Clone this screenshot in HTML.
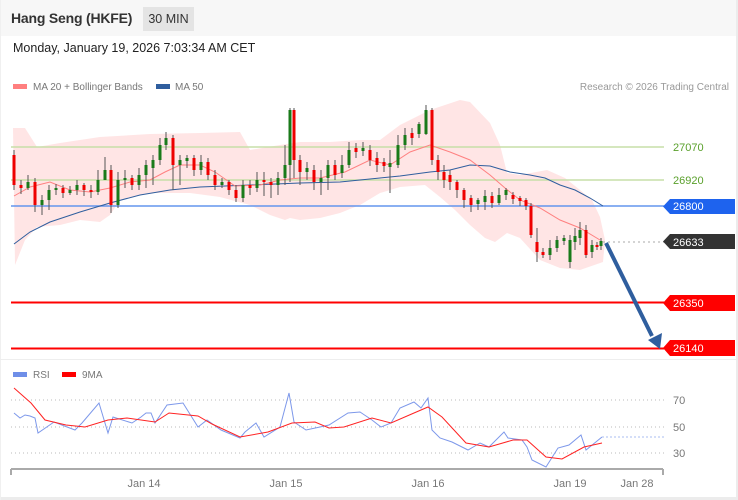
<!DOCTYPE html>
<html><head><meta charset="utf-8"><style>
html,body{margin:0;padding:0;background:#fff;}
body{width:738px;height:500px;overflow:hidden;position:relative;font-family:"Liberation Sans",Arial,sans-serif;}
.hdr{position:absolute;left:0;top:0;width:736px;height:36px;background:#f7f7f7;}
.title{position:absolute;left:11px;top:10px;font-size:14px;letter-spacing:-0.2px;font-weight:bold;color:#333;}
.tf{position:absolute;left:143px;top:7px;width:51px;height:24px;background:#e4e4e4;font-size:12.5px;color:#333;line-height:24px;text-align:center;}
.date{position:absolute;left:13px;top:41px;font-size:12.5px;color:#222;}
.rb{position:absolute;left:736px;top:0;width:2px;height:500px;background:#ececec;}
.bb{position:absolute;left:0;top:497px;width:738px;height:3px;background:#ececec;}
.lb{position:absolute;left:0;top:0;width:1px;height:500px;background:#f0f0f0;}
svg{position:absolute;left:0;top:0;}
</style></head><body>
<div class="hdr"></div>
<div class="title">Hang Seng (HKFE)</div>
<div class="tf">30 MIN</div>
<div class="date">Monday, January 19, 2026 7:03:34 AM CET</div>
<div class="rb"></div><div class="bb"></div><div class="lb"></div>
<svg width="738" height="500" xmlns="http://www.w3.org/2000/svg" font-family="Liberation Sans, Arial, sans-serif">
<rect x="13" y="84" width="14" height="5" fill="#ff7f7f"/>
<text x="33" y="90" font-size="10" fill="#777">MA 20 + Bollinger Bands</text>
<rect x="156" y="84" width="14" height="5" fill="#2f5e9e"/>
<text x="175" y="90" font-size="10" fill="#777">MA 50</text>
<text x="729" y="90" font-size="10" fill="#999" text-anchor="end">Research © 2026 Trading Central</text>

<polygon fill="#ffdede" opacity="0.8" points="13,128 25,128 37,147 60,143 100,137 150,134 200,133 240,132 250,150 280,145 300,142 330,142 360,140 380,140 400,125 430,110 460,100 470,102 490,123 500,145 507,173 520,175 547,170 565,178 580,190 592,200 600,217 605,240 603,262 580,270 560,268 540,260 520,238 507,233 495,242 485,238 470,225 455,210 440,197 425,185 400,187 380,193 360,205 340,213 320,218 300,220 290,218 285,220 270,215 250,205 220,197 190,193 150,193 120,200 110,215 100,222 80,220 60,225 37,227 25,240 15,265"/>

<line x1="11" y1="147" x2="664" y2="147" stroke="#c7dfa8" stroke-width="1.5"/>
<line x1="11" y1="180" x2="664" y2="180" stroke="#c7dfa8" stroke-width="1.5"/>
<line x1="11" y1="206" x2="664" y2="206" stroke="#6495ed" stroke-width="1.5"/>
<line x1="603" y1="242" x2="664" y2="242" stroke="#aaa" stroke-dasharray="2,3"/>
<line x1="11" y1="302.5" x2="664" y2="302.5" stroke="#f00" stroke-width="2"/>
<line x1="11" y1="348.5" x2="664" y2="348.5" stroke="#f00" stroke-width="2"/>

<polyline fill="none" stroke="#2f5e9e" stroke-width="1" points="14,244 30,232 50,222 80,212 110,203 140,195 170,190 200,187 250,185 300,183 340,182 380,178 400,176 430,172 450,170 470,165 490,166 510,172 530,175 545,178 560,185 575,190 590,198 603,206"/>
<polyline fill="none" stroke="#ff8080" stroke-width="1" points="14,196 30,187 50,182 70,190 90,192 110,188 130,182 150,180 165,172 180,165 200,165 215,172 235,186 260,185 280,180 300,178 320,178 345,172 370,160 390,165 410,152 430,145 450,152 470,160 490,175 505,188 520,200 540,208 560,220 580,228 600,240"/>

<g>
<line x1="14" y1="150" x2="14" y2="190" stroke="#555"/><rect x="12.5" y="155" width="3" height="30" fill="#e00"/>
<line x1="21" y1="180" x2="21" y2="194" stroke="#555"/><rect x="19.5" y="185" width="3" height="3" fill="#e00"/>
<line x1="28" y1="175" x2="28" y2="190" stroke="#555"/><rect x="26.5" y="182" width="3" height="6" fill="#1a7a1a"/>
<line x1="35" y1="178" x2="35" y2="212" stroke="#555"/><rect x="33.5" y="182" width="3" height="23" fill="#e00"/>
<line x1="42" y1="195" x2="42" y2="215" stroke="#555"/><rect x="40.5" y="200" width="3" height="5" fill="#1a7a1a"/>
<line x1="49" y1="185" x2="49" y2="210" stroke="#555"/><rect x="47.5" y="190" width="3" height="10" fill="#1a7a1a"/>
<line x1="56" y1="184" x2="56" y2="195" stroke="#555"/><rect x="54.5" y="188" width="3" height="2" fill="#1a7a1a"/>
<line x1="63" y1="185" x2="63" y2="198" stroke="#555"/><rect x="61.5" y="188" width="3" height="5" fill="#e00"/>
<line x1="70" y1="186" x2="70" y2="195" stroke="#555"/><rect x="68.5" y="190" width="3" height="3" fill="#1a7a1a"/>
<line x1="77" y1="180" x2="77" y2="195" stroke="#555"/><rect x="75.5" y="185" width="3" height="5" fill="#1a7a1a"/>
<line x1="84" y1="183" x2="84" y2="196" stroke="#555"/><rect x="82.5" y="185" width="3" height="5" fill="#e00"/>
<line x1="91" y1="185" x2="91" y2="198" stroke="#555"/><rect x="89.5" y="190" width="3" height="2" fill="#e00"/>
<line x1="98" y1="170" x2="98" y2="195" stroke="#555"/><rect x="96.5" y="180" width="3" height="12" fill="#1a7a1a"/>
<line x1="105" y1="157" x2="105" y2="178" stroke="#555"/><rect x="103.5" y="170" width="3" height="10" fill="#1a7a1a"/>
<line x1="111" y1="165" x2="111" y2="213" stroke="#555"/><rect x="109.5" y="170" width="3" height="35" fill="#e00"/>
<line x1="118" y1="172" x2="118" y2="208" stroke="#555"/><rect x="116.5" y="180" width="3" height="25" fill="#1a7a1a"/>
<line x1="125" y1="170" x2="125" y2="188" stroke="#555"/><rect x="123.5" y="178" width="3" height="2" fill="#1a7a1a"/>
<line x1="132" y1="175" x2="132" y2="190" stroke="#555"/><rect x="130.5" y="178" width="3" height="7" fill="#e00"/>
<line x1="139" y1="168" x2="139" y2="190" stroke="#555"/><rect x="137.5" y="175" width="3" height="10" fill="#1a7a1a"/>
<line x1="146" y1="160" x2="146" y2="188" stroke="#555"/><rect x="144.5" y="165" width="3" height="10" fill="#1a7a1a"/>
<line x1="153" y1="155" x2="153" y2="185" stroke="#555"/><rect x="151.5" y="160" width="3" height="8" fill="#1a7a1a"/>
<line x1="160" y1="138" x2="160" y2="165" stroke="#555"/><rect x="158.5" y="145" width="3" height="15" fill="#1a7a1a"/>
<line x1="166" y1="132" x2="166" y2="150" stroke="#555"/><rect x="164.5" y="138" width="3" height="7" fill="#1a7a1a"/>
<line x1="173" y1="135" x2="173" y2="190" stroke="#555"/><rect x="171.5" y="138" width="3" height="27" fill="#e00"/>
<line x1="180" y1="155" x2="180" y2="185" stroke="#555"/><rect x="178.5" y="160" width="3" height="5" fill="#1a7a1a"/>
<line x1="187" y1="155" x2="187" y2="168" stroke="#555"/><rect x="185.5" y="158" width="3" height="3" fill="#1a7a1a"/>
<line x1="194" y1="155" x2="194" y2="176" stroke="#555"/><rect x="192.5" y="158" width="3" height="12" fill="#e00"/>
<line x1="201" y1="155" x2="201" y2="175" stroke="#555"/><rect x="199.5" y="162" width="3" height="8" fill="#1a7a1a"/>
<line x1="208" y1="158" x2="208" y2="180" stroke="#555"/><rect x="206.5" y="162" width="3" height="13" fill="#e00"/>
<line x1="215" y1="170" x2="215" y2="190" stroke="#555"/><rect x="213.5" y="175" width="3" height="10" fill="#e00"/>
<line x1="222" y1="178" x2="222" y2="188" stroke="#555"/><rect x="220.5" y="182" width="3" height="3" fill="#1a7a1a"/>
<line x1="229" y1="180" x2="229" y2="195" stroke="#555"/><rect x="227.5" y="182" width="3" height="8" fill="#e00"/>
<line x1="236" y1="185" x2="236" y2="202" stroke="#555"/><rect x="234.5" y="190" width="3" height="8" fill="#e00"/>
<line x1="243" y1="180" x2="243" y2="202" stroke="#555"/><rect x="241.5" y="185" width="3" height="13" fill="#1a7a1a"/>
<line x1="250" y1="180" x2="250" y2="195" stroke="#555"/><rect x="248.5" y="185" width="3" height="3" fill="#e00"/>
<line x1="257" y1="172" x2="257" y2="192" stroke="#555"/><rect x="255.5" y="180" width="3" height="8" fill="#1a7a1a"/>
<line x1="264" y1="172" x2="264" y2="196" stroke="#555"/><rect x="262.5" y="180" width="3" height="2" fill="#e00"/>
<line x1="271" y1="178" x2="271" y2="198" stroke="#555"/><rect x="269.5" y="182" width="3" height="3" fill="#e00"/>
<line x1="278" y1="172" x2="278" y2="195" stroke="#555"/><rect x="276.5" y="178" width="3" height="7" fill="#1a7a1a"/>
<line x1="285" y1="145" x2="285" y2="185" stroke="#555"/><rect x="283.5" y="165" width="3" height="13" fill="#1a7a1a"/>
<line x1="290" y1="108" x2="290" y2="182" stroke="#555"/><rect x="288.5" y="110" width="3" height="55" fill="#1a7a1a"/>
<line x1="294" y1="108" x2="294" y2="178" stroke="#555"/><rect x="292.5" y="110" width="3" height="50" fill="#e00"/>
<line x1="300" y1="155" x2="300" y2="185" stroke="#555"/><rect x="298.5" y="160" width="3" height="12" fill="#e00"/>
<line x1="307" y1="162" x2="307" y2="180" stroke="#555"/><rect x="305.5" y="168" width="3" height="4" fill="#1a7a1a"/>
<line x1="314" y1="165" x2="314" y2="190" stroke="#555"/><rect x="312.5" y="170" width="3" height="12" fill="#e00"/>
<line x1="321" y1="170" x2="321" y2="195" stroke="#555"/><rect x="319.5" y="178" width="3" height="4" fill="#1a7a1a"/>
<line x1="328" y1="160" x2="328" y2="190" stroke="#555"/><rect x="326.5" y="165" width="3" height="13" fill="#1a7a1a"/>
<line x1="335" y1="160" x2="335" y2="180" stroke="#555"/><rect x="333.5" y="165" width="3" height="10" fill="#e00"/>
<line x1="342" y1="155" x2="342" y2="178" stroke="#555"/><rect x="340.5" y="165" width="3" height="8" fill="#1a7a1a"/>
<line x1="349" y1="142" x2="349" y2="168" stroke="#555"/><rect x="347.5" y="150" width="3" height="15" fill="#1a7a1a"/>
<line x1="356" y1="143" x2="356" y2="158" stroke="#555"/><rect x="354.5" y="148" width="3" height="4" fill="#e00"/>
<line x1="363" y1="142" x2="363" y2="156" stroke="#555"/><rect x="361.5" y="148" width="3" height="3" fill="#1a7a1a"/>
<line x1="370" y1="145" x2="370" y2="166" stroke="#555"/><rect x="368.5" y="150" width="3" height="10" fill="#e00"/>
<line x1="377" y1="152" x2="377" y2="172" stroke="#555"/><rect x="375.5" y="158" width="3" height="7" fill="#e00"/>
<line x1="384" y1="158" x2="384" y2="172" stroke="#555"/><rect x="382.5" y="162" width="3" height="4" fill="#e00"/>
<line x1="390" y1="150" x2="390" y2="193" stroke="#555"/><rect x="388.5" y="163" width="3" height="4" fill="#1a7a1a"/>
<line x1="398" y1="135" x2="398" y2="168" stroke="#555"/><rect x="396.5" y="145" width="3" height="20" fill="#1a7a1a"/>
<line x1="405" y1="128" x2="405" y2="150" stroke="#555"/><rect x="403.5" y="135" width="3" height="10" fill="#1a7a1a"/>
<line x1="412" y1="128" x2="412" y2="145" stroke="#555"/><rect x="410.5" y="133" width="3" height="5" fill="#e00"/>
<line x1="419" y1="122" x2="419" y2="138" stroke="#555"/><rect x="417.5" y="124" width="3" height="10" fill="#1a7a1a"/>
<line x1="426" y1="105" x2="426" y2="135" stroke="#555"/><rect x="424.5" y="110" width="3" height="24" fill="#1a7a1a"/>
<line x1="432" y1="108" x2="432" y2="165" stroke="#555"/><rect x="430.5" y="110" width="3" height="50" fill="#e00"/>
<line x1="438" y1="155" x2="438" y2="180" stroke="#555"/><rect x="436.5" y="160" width="3" height="12" fill="#e00"/>
<line x1="444" y1="165" x2="444" y2="188" stroke="#555"/><rect x="442.5" y="172" width="3" height="8" fill="#e00"/>
<line x1="450" y1="170" x2="450" y2="190" stroke="#555"/><rect x="448.5" y="175" width="3" height="7" fill="#e00"/>
<line x1="457" y1="180" x2="457" y2="198" stroke="#555"/><rect x="455.5" y="182" width="3" height="8" fill="#e00"/>
<line x1="464" y1="188" x2="464" y2="208" stroke="#555"/><rect x="462.5" y="190" width="3" height="10" fill="#e00"/>
<line x1="471" y1="195" x2="471" y2="212" stroke="#555"/><rect x="469.5" y="198" width="3" height="7" fill="#e00"/>
<line x1="478" y1="198" x2="478" y2="210" stroke="#555"/><rect x="476.5" y="200" width="3" height="4" fill="#1a7a1a"/>
<line x1="485" y1="190" x2="485" y2="210" stroke="#555"/><rect x="483.5" y="196" width="3" height="6" fill="#1a7a1a"/>
<line x1="492" y1="192" x2="492" y2="208" stroke="#555"/><rect x="490.5" y="196" width="3" height="7" fill="#e00"/>
<line x1="499" y1="188" x2="499" y2="205" stroke="#555"/><rect x="497.5" y="195" width="3" height="8" fill="#1a7a1a"/>
<line x1="506" y1="188" x2="506" y2="200" stroke="#555"/><rect x="504.5" y="190" width="3" height="5" fill="#1a7a1a"/>
<line x1="513" y1="192" x2="513" y2="204" stroke="#555"/><rect x="511.5" y="195" width="3" height="4" fill="#e00"/>
<line x1="520" y1="196" x2="520" y2="206" stroke="#555"/><rect x="518.5" y="198" width="3" height="3" fill="#e00"/>
<line x1="526" y1="198" x2="526" y2="210" stroke="#555"/><rect x="524.5" y="200" width="3" height="6" fill="#e00"/>
<line x1="531" y1="203" x2="531" y2="238" stroke="#555"/><rect x="529.5" y="206" width="3" height="29" fill="#e00"/>
<line x1="537" y1="228" x2="537" y2="262" stroke="#555"/><rect x="535.5" y="242" width="3" height="10" fill="#e00"/>
<line x1="543" y1="248" x2="543" y2="258" stroke="#555"/><rect x="541.5" y="252" width="3" height="3" fill="#e00"/>
<line x1="550" y1="240" x2="550" y2="260" stroke="#555"/><rect x="548.5" y="248" width="3" height="7" fill="#1a7a1a"/>
<line x1="557" y1="236" x2="557" y2="252" stroke="#555"/><rect x="555.5" y="240" width="3" height="8" fill="#1a7a1a"/>
<line x1="564" y1="235" x2="564" y2="245" stroke="#555"/><rect x="562.5" y="238" width="3" height="3" fill="#1a7a1a"/>
<line x1="570" y1="235" x2="570" y2="268" stroke="#555"/><rect x="568.5" y="240" width="3" height="22" fill="#1a7a1a"/>
<line x1="575" y1="228" x2="575" y2="250" stroke="#555"/><rect x="573.5" y="236" width="3" height="6" fill="#1a7a1a"/>
<line x1="580" y1="222" x2="580" y2="245" stroke="#555"/><rect x="578.5" y="230" width="3" height="8" fill="#1a7a1a"/>
<line x1="586" y1="225" x2="586" y2="258" stroke="#555"/><rect x="584.5" y="230" width="3" height="25" fill="#e00"/>
<line x1="592" y1="240" x2="592" y2="258" stroke="#555"/><rect x="590.5" y="245" width="3" height="7" fill="#1a7a1a"/>
<line x1="597" y1="242" x2="597" y2="250" stroke="#555"/><rect x="595.5" y="245" width="3" height="2" fill="#e00"/>
<line x1="601" y1="238" x2="601" y2="250" stroke="#555"/><rect x="599.5" y="241" width="3" height="5" fill="#1a7a1a"/>
</g>

<line x1="606" y1="243" x2="652" y2="336" stroke="#2f5e9e" stroke-width="4"/>
<polygon points="648,340 662,333 660,349" fill="#2f5e9e"/>

<text x="673" y="151" font-size="11" fill="#5aa02c">27070</text>
<text x="673" y="184" font-size="11" fill="#5aa02c">26920</text>
<polygon points="670,199 735,199 735,214 670,214 663,206.5" fill="#1e63ee"/>
<text x="673" y="210" font-size="11" fill="#fff">26800</text>
<polygon points="670,234 735,234 735,249 670,249 663,241.5" fill="#333"/>
<text x="673" y="246" font-size="11" fill="#fff">26633</text>
<polygon points="670,295 735,295 735,311 670,311 663,303" fill="#f00"/>
<text x="673" y="307" font-size="11" fill="#fff">26350</text>
<polygon points="670,340 735,340 735,356 670,356 663,348" fill="#f00"/>
<text x="673" y="352" font-size="11" fill="#fff">26140</text>

<line x1="0" y1="359.5" x2="736" y2="359.5" stroke="#eee"/>

<rect x="13" y="372" width="14" height="5" fill="#6f8fe8"/>
<text x="33" y="378" font-size="10" fill="#777">RSI</text>
<rect x="62" y="372" width="14" height="5" fill="#f00"/>
<text x="82" y="378" font-size="10" fill="#777">9MA</text>
<line x1="11" y1="400" x2="664" y2="400" stroke="#bbb" stroke-dasharray="1,3"/>
<line x1="11" y1="427" x2="664" y2="427" stroke="#bbb" stroke-dasharray="1,3"/>
<line x1="11" y1="453" x2="664" y2="453" stroke="#bbb" stroke-dasharray="1,3"/>
<text x="673" y="404" font-size="11" fill="#777">70</text>
<text x="673" y="431" font-size="11" fill="#777">50</text>
<text x="673" y="457" font-size="11" fill="#777">30</text>
<polyline fill="none" stroke="#7d98ea" stroke-width="1" points="14,413 20,418 25,415 30,416 35,418 38,433 54,422 75,430 82,423 99,403 108,433 113,417 132,423 141,417 146,413 151,413 155,423 167,405 183,403 198,427 207,420 221,430 240,438 245,432 256,423 264,437 280,427 289,393 294,422 306,430 320,427 329,425 348,413 360,412 372,420 381,427 391,423 400,408 414,402 421,408 428,398 432,430 440,438 452,442 468,450 480,443 489,447 504,432 508,438 522,440 527,447 532,460 546,467 558,448 569,445 581,435 586,450 602,437"/>
<line x1="602" y1="437" x2="664" y2="437" stroke="#a9bcf0" stroke-dasharray="2,2"/>
<polyline fill="none" stroke="#f22" stroke-width="1" points="14,388 31,403 45,420 66,425 85,427 108,420 127,418 155,422 169,413 198,416 212,424 240,437 268,432 292,423 315,422 329,428 344,427 372,418 391,423 414,413 428,407 442,417 466,443 489,447 513,440 527,440 546,457 562,459 584,447 602,443"/>
<line x1="11" y1="469" x2="663" y2="469" stroke="#aaa" stroke-width="2"/>
<line x1="11" y1="469" x2="11" y2="475" stroke="#aaa" stroke-width="2"/>
<line x1="663" y1="469" x2="663" y2="475" stroke="#aaa" stroke-width="2"/>
<g font-size="11" fill="#777" text-anchor="middle">
<text x="144" y="487">Jan 14</text>
<text x="286" y="487">Jan 15</text>
<text x="428" y="487">Jan 16</text>
<text x="570" y="487">Jan 19</text>
<text x="637" y="487">Jan 28</text>
</g>
</svg>
</body></html>
